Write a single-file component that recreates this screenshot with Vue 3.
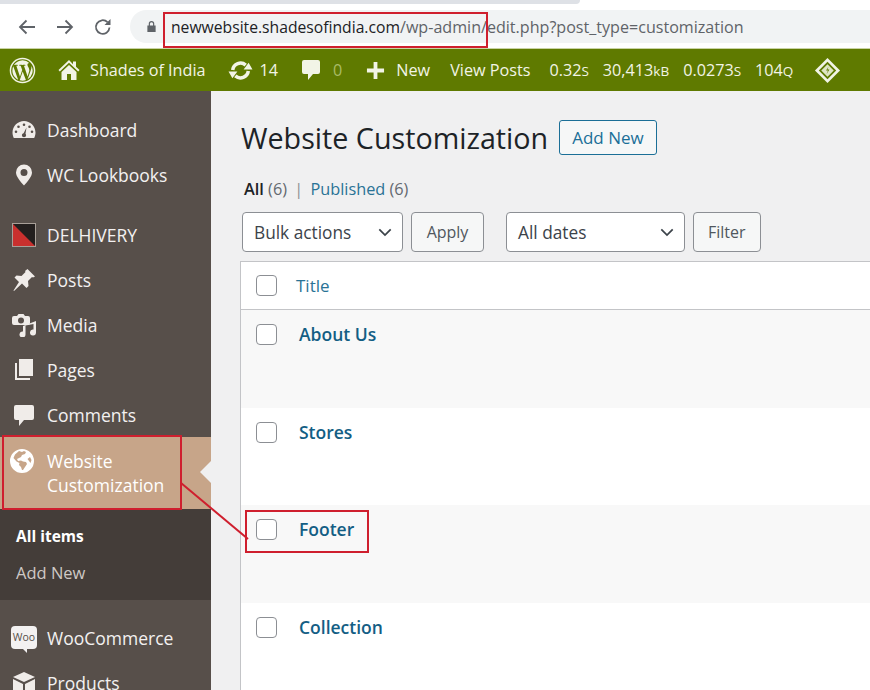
<script setup>
const topMenu = [
  { label: 'Dashboard', icon: 'dash' },
  { label: 'WC Lookbooks', icon: 'pin' }
]
const midMenu = [
  { label: 'Posts', icon: 'post' },
  { label: 'Media', icon: 'media' },
  { label: 'Pages', icon: 'pages' },
  { label: 'Comments', icon: 'comment' }
]
const rows = [
  { title: 'About Us', alt: true },
  { title: 'Stores', alt: false },
  { title: 'Footer', alt: true },
  { title: 'Collection', alt: false }
]
</script>

<template>
  <div class="page">
    <div class="tabstrip"><div class="tab-gray"></div></div>
    <div class="toolbar">
      <svg class="nav-icon" viewBox="0 0 20 20"><path d="M18 10H3M9.5 3.5 3 10l6.5 6.500" fill="none" stroke="#5f6368" stroke-width="1.800"/></svg>
      <svg class="nav-icon" viewBox="0 0 20 20"><path d="M2 10h15M10.500 3.500 17 10l-6.500 6.500" fill="none" stroke="#5f6368" stroke-width="1.800"/></svg>
      <svg class="nav-icon" viewBox="0 0 20 20"><path d="M16.500 10.500a6.800 6.800 0 1 1-2-5.300" fill="none" stroke="#5f6368" stroke-width="1.800"/><path d="M17.500 2v6h-6z" fill="#5f6368"/></svg>
      <div class="omnibox">
        <svg class="lock" viewBox="0 0 12 14"><path d="M3 6V4a3 3 0 0 1 6 0v2h1.500v7h-9V6zm1.300 0h3.400V4a1.700 1.700 0 0 0-3.400 0z" fill="#5f6368"/></svg>
        <span class="url"><span class="host">newwebsite.shadesofindia.com</span>/wp-admin/edit.php?post_type=customization</span>
      </div>
    </div>

    <div class="adminbar">
      <svg class="wp-logo" viewBox="0 0 28 28">
        <circle cx="14" cy="14" r="12.500" fill="none" stroke="#f2f4e6" stroke-width="1.500"/>
        <path d="M3.500 14c0 4.200 2.400 7.800 6 9.500L4.400 9.700A10.500 10.500 0 0 0 3.500 14zm17.500-.5c0-1.300-.5-2.200-.9-2.900-.5-.9-1-1.600-1-2.500 0-1 .8-1.900 1.800-1.900h.2A10.500 10.500 0 0 0 5.200 8.200h.7c1.100 0 2.800-.1 2.800-.1.600 0 .6.800.1.900 0 0-.6.100-1.200.1l3.800 11.300 2.300-6.900-1.600-4.400c-.6 0-1.100-.1-1.100-.1-.6 0-.5-.9 0-.9 0 0 1.800.1 2.800.1s2.800-.1 2.800-.1c.6 0 .6.800.1.900 0 0-.6.100-1.200.1l3.800 11.200 1-3.500c.5-1.400.8-2.400.8-3.300zM14.200 15l-3.100 9.100a10.500 10.500 0 0 0 6.500-.2l-.1-.1zm9-6c0 .4.100.800.100 1.200 0 1.100-.2 2.300-.8 3.800l-3.200 9.200A10.500 10.500 0 0 0 23.200 9z" fill="#f2f4e6"/>
      </svg>
      <svg class="bar-icon home" viewBox="0 0 22 22"><path d="M11 1 .5 11l1.300 1.400L11 3.800l9.200 8.600 1.300-1.400-3.500-3.300V2.500h-3v2.800z" fill="#f2f4e6"/><path d="M11 6 3.500 13v8H9v-6h4v6h5.500v-8z" fill="#f2f4e6"/></svg>
      <span class="bar-text site">Shades of India</span>
      <svg class="bar-icon sync" viewBox="0 0 24 24">
        <path d="M4.500 11.500A7.600 7.600 0 0 1 17 6.800M19.500 12.500A7.600 7.600 0 0 1 7 17.200" fill="none" stroke="#f2f4e6" stroke-width="3.400"/>
        <path d="M23.500 11h-8.500l4.800-6.500zM.5 13H9l-4.800 6.500z" fill="#f2f4e6"/>
      </svg>
      <span class="bar-text count">14</span>
      <svg class="bar-icon bubble" viewBox="0 0 20 22"><path d="M3 1h14a2 2 0 0 1 2 2v10a2 2 0 0 1-2 2h-5l-5 6v-6H3a2 2 0 0 1-2-2V3a2 2 0 0 1 2-2z" fill="#f2f4e6"/></svg>
      <span class="bar-text zero">0</span>
      <svg class="bar-icon plus" viewBox="0 0 20 20"><path d="M8 1h4v7h7v4h-7v7H8v-7H1V8h7z" fill="#f2f4e6"/></svg>
      <span class="bar-text new">New</span>
      <span class="bar-text view">View Posts</span>
      <span class="bar-text stat s1">0.32<small>S</small></span>
      <span class="bar-text stat s2">30,413<small>kB</small></span>
      <span class="bar-text stat s3">0.0273<small>S</small></span>
      <span class="bar-text stat s4">104<small>Q</small></span>
      <svg class="diamond" viewBox="0 0 28 28">
        <path d="M14 1 27 14 14 27 1 14z" fill="#f2f4e6"/>
        <path d="M14 5 23 14 14 23 5 14z" fill="#5f7a00"/>
        <path d="M14 7.500 20.500 14 14 20.500 7.500 14z" fill="#dfe5c4"/>
        <path d="M15 10l-2.500 4h2l-1.500 4 3-5h-2z" fill="#5f7a00"/>
      </svg>
    </div>

    <div class="body">
      <aside class="sidebar">
        <ul class="menu first">
          <li v-for="m in topMenu" :key="m.label" class="menu-item">
            <span class="micon">
              <svg v-if="m.icon === 'dash'" viewBox="0 0 24 24" class="ic ic-dash"><path d="M12 3C5.900 3 .5 8 .5 14.500c0 2 .5 3.800 1.300 5.500h20.400c.8-1.700 1.300-3.500 1.300-5.500C23.500 8 18.100 3 12 3zM12 5.500a1.300 1.300 0 1 1 0 2.600 1.300 1.300 0 0 1 0-2.600zM6.500 7.500a1.300 1.300 0 1 1 0 2.600 1.300 1.300 0 0 1 0-2.600zM17.500 7.500a1.300 1.300 0 1 1 0 2.600 1.300 1.300 0 0 1 0-2.600zM4 12.500a1.300 1.300 0 1 1 0 2.600 1.300 1.300 0 0 1 0-2.600zM20 12.500a1.300 1.300 0 1 1 0 2.600 1.300 1.300 0 0 1 0-2.600zM14.500 9.500l-1 6.200c.4.500.6 1 .6 1.500a2.100 2.100 0 0 1-4.200 0c0-1 .7-1.800 1.700-2z" fill="#f0ece9" fill-rule="evenodd"/></svg>
              <svg v-else viewBox="0 0 24 24" class="ic"><path d="M12 1.500a8 8 0 0 0-8 8c0 3.800 4.500 9.500 8 13 3.500-3.500 8-9.200 8-13a8 8 0 0 0-8-8zm0 4.500a3.500 3.500 0 1 1 0 7 3.500 3.500 0 0 1 0-7z" fill="#f0ece9" fill-rule="evenodd"/></svg>
            </span>
            <span class="mlabel">{{ m.label }}</span>
          </li>
        </ul>
        <ul class="menu second">
          <li class="menu-item">
            <span class="micon">
              <svg viewBox="0 0 24 24" class="ic ic-del"><rect x=".5" y=".5" width="23" height="23" fill="#c9302e" stroke="#a89f98"/><path d="M1 1h22v22z" fill="#231f1e"/></svg>
            </span>
            <span class="mlabel">DELHIVERY</span>
          </li>
          <li v-for="m in midMenu" :key="m.label" class="menu-item">
            <span class="micon">
              <svg v-if="m.icon === 'post'" viewBox="0 0 24 24" class="ic"><path d="M15.500 1 23 8.500l-2 1-1-.5-4 4 .5 5-2 2-4.500-4.500L2 23l-.500-.5 5.500-8.500-4.500-4.500 2-2 5 .5 4-4-.5-1z" fill="#f0ece9"/></svg>
              <svg v-else-if="m.icon === 'media'" viewBox="0 0 26 24" class="ic ic-media"><path d="M3 3h3l1.500-2h5L14 3h3a2 2 0 0 1 2 2v5a2 2 0 0 1-2 2H3a2 2 0 0 1-2-2V5a2 2 0 0 1 2-2zm7 1.500a3 3 0 1 0 0 6 3 3 0 0 0 0-6z" fill="#f0ece9" fill-rule="evenodd"/><path d="M25 8v11.500a3 3 0 1 1-2.500-3V11l-8 1.500v9a3 3 0 1 1-2.500-3V13z" fill="#f0ece9"/></svg>
              <svg v-else-if="m.icon === 'pages'" viewBox="0 0 24 24" class="ic"><path d="M7 1h14v17H7z" fill="#f0ece9"/><path d="M3 5h2v15h13v2H3z" fill="#f0ece9"/></svg>
              <svg v-else viewBox="0 0 24 24" class="ic"><path d="M4 2h16a2 2 0 0 1 2 2v11a2 2 0 0 1-2 2h-8l-5 6v-6H4a2 2 0 0 1-2-2V4a2 2 0 0 1 2-2z" fill="#f0ece9"/></svg>
            </span>
            <span class="mlabel">{{ m.label }}</span>
          </li>
        </ul>
        <div class="menu-item active">
          <span class="micon">
            <svg viewBox="0 0 24 24" class="ic ic-globe"><path d="M12 0a12 12 0 1 0 0 24 12 12 0 0 0 0-24zM9 2l3 1 2-1 2 1-1 2-3 1-1 2-2 1-2 1 1 2 3-.5 2 1 3 .5 1 2-2 3-2 3h-1l-1-3-2-2 .5-2-3-1.500L3.500 9 5 5.500zm11 6 1.500 3-1 3-1.500-2-1.500-2z" fill="#fff" fill-rule="evenodd"/></svg>
          </span>
          <span class="mlabel two-line">Website<br>Customization</span>
          <span class="pointer"></span>
        </div>
        <div class="submenu">
          <div class="sub on">All items</div>
          <div class="sub">Add New</div>
        </div>
        <ul class="menu third">
          <li class="menu-item">
            <span class="micon">
              <span class="woo">Woo</span>
            </span>
            <span class="mlabel">WooCommerce</span>
          </li>
          <li class="menu-item">
            <span class="micon">
              <svg viewBox="0 0 24 24" class="ic"><path d="M12 1 23 6 12 11 1 6z" fill="#f0ece9"/><path d="M1 8l10 5v11L1 19zM23 8v11l-10 5V13z" fill="#f0ece9"/></svg>
            </span>
            <span class="mlabel">Products</span>
          </li>
        </ul>
      </aside>

      <main class="content">
        <div class="heading">
          <h1>Website Customization</h1>
          <a class="add-new">Add New</a>
        </div>
        <div class="subsub">
          <b>All</b> <span class="num">(6)</span> <span class="sep">|</span> <a>Published</a> <span class="num">(6)</span>
        </div>
        <div class="filters">
          <div class="select bulk">
            <span>Bulk actions</span>
            <svg viewBox="0 0 16 10" class="chev"><path d="M1.500 1.500 8 8l6.500-6.500" fill="none" stroke="#3c434a" stroke-width="2"/></svg>
          </div>
          <button class="btn apply">Apply</button>
          <div class="select dates">
            <span>All dates</span>
            <svg viewBox="0 0 16 10" class="chev"><path d="M1.500 1.500 8 8l6.500-6.500" fill="none" stroke="#3c434a" stroke-width="2"/></svg>
          </div>
          <button class="btn">Filter</button>
        </div>
        <div class="table">
          <div class="thead">
            <span class="check"></span>
            <a class="th-title">Title</a>
          </div>
          <div v-for="r in rows" :key="r.title" class="row" :class="{ alt: r.alt }">
            <span class="check"></span>
            <a class="row-title">{{ r.title }}</a>
          </div>
        </div>
      </main>
    </div>

    <!-- red annotation marks drawn on top of the screenshot -->
    <div class="mark mark-url"></div>
    <div class="mark mark-menu"></div>
    <div class="mark mark-footer"></div>
    <svg class="mark-line" viewBox="0 0 870 690"><path d="M181 483 248 539" stroke="#cf1f2e" stroke-width="2" fill="none"/></svg>
  </div>
</template>

<style>
body {
  margin: 0;
  overflow: hidden;
}
</style>

<style scoped>
.page {
  position: relative;
  width: 870px;
  height: 690px;
  overflow: hidden;
  background: #f0f0f1;
  font-family: "Open Sans", "Noto Sans", sans-serif;
  color: #3c434a;
}

.tabstrip {
  height: 4px;
  background: #fff;
}

.tab-gray {
  width: 580px;
  height: 4px;
  background: #dee1e6;
  border-bottom-right-radius: 4px;
}

.toolbar {
  display: flex;
  align-items: center;
  height: 44px;
  padding-left: 17px;
  padding-top: 1px;
  background: #fff;
  box-sizing: border-box;
}

.nav-icon {
  width: 20px;
  height: 20px;
  margin-right: 18px;
  flex-shrink: 0;
}

.omnibox {
  display: flex;
  align-items: center;
  flex: 1;
  height: 33px;
  margin-left: -1px;
  padding-left: 16px;
  background: #f1f3f4;
  border-radius: 17px 0 0 17px;
}

.lock {
  width: 11px;
  height: 13px;
  margin-right: 14px;
}

.url {
  font-size: 16.100px;
  color: #5f6368;
  white-space: nowrap;
}

.host {
  font-size: 15.700px;
  color: #202124;
}

.adminbar {
  display: flex;
  align-items: center;
  height: 43px;
  background: #5f7a00;
  border-top: 1px solid #c9d3a4;
  box-sizing: border-box;
  color: #f2f4e6;
}

.wp-logo {
  width: 27px;
  height: 27px;
  margin-left: 9px;
  flex-shrink: 0;
}

.bar-icon {
  flex-shrink: 0;
}

.home {
  width: 22px;
  height: 22px;
  margin-left: 22px;
}

.bar-text {
  font-size: 16.200px;
  white-space: nowrap;
}

.site {
  margin-left: 10px;
}

.sync {
  width: 25px;
  height: 25px;
  margin-left: 22px;
}

.count {
  margin-left: 7px;
}

.bubble {
  width: 20px;
  height: 22px;
  margin-left: 23px;
}

.zero {
  margin-left: 12px;
  color: #a9bc66;
}

.plus {
  width: 19px;
  height: 19px;
  margin-left: 24px;
}

.new {
  margin-left: 11px;
}

.view {
  margin-left: 20px;
}

.stat small {
  font-size: 13.500px;
}

.s1 {
  margin-left: 19px;
}

.s2,
.s3,
.s4 {
  margin-left: 14px;
}

.diamond {
  width: 27px;
  height: 27px;
  margin-left: 21px;
}

.body {
  display: flex;
  height: 599px;
}

.sidebar {
  width: 211px;
  flex-shrink: 0;
  background: #574f4a;
  color: #f3f1f1;
}

.menu {
  list-style: none;
  margin: 0;
  padding: 0;
}

.first {
  padding-top: 16px;
}

.second {
  padding-top: 15px;
}

.third {
  padding-top: 15px;
}

.menu-item {
  display: flex;
  align-items: center;
  height: 45px;
  font-size: 17.500px;
}

.micon {
  display: flex;
  align-items: center;
  justify-content: center;
  width: 24px;
  height: 24px;
  margin-left: 12px;
  margin-right: 11px;
  flex-shrink: 0;
}

.ic {
  width: 24px;
  height: 24px;
}

.ic-media {
  width: 26px;
  flex-shrink: 0;
}

.mlabel {
  white-space: nowrap;
}

.two-line {
  line-height: 24px;
}

.active {
  position: relative;
  height: 72px;
  align-items: flex-start;
  padding-top: 12px;
  box-sizing: border-box;
  background: #c7a589;
  color: #fff;
}

.active .micon {
  margin-left: 10px;
  margin-right: 13px;
}

.pointer {
  position: absolute;
  right: 0;
  top: 24px;
  border: 11px solid transparent;
  border-left: none;
  border-right-color: #f0f0f1;
}

.submenu {
  height: 91px;
  padding-top: 14px;
  box-sizing: border-box;
  background: #443d39;
}

.sub {
  height: 37px;
  line-height: 26px;
  padding-left: 16px;
  font-size: 16.500px;
  color: #cfc9c5;
}

.sub.on {
  font-size: 15.500px;
  font-weight: 700;
  color: #fff;
}

.woo {
  position: relative;
  display: block;
  width: 26px;
  height: 23px;
  flex-shrink: 0;
  border-radius: 4px;
  background: #f3f1f1;
  color: #574f4a;
  font-size: 10.500px;
  line-height: 22px;
  text-align: center;
}

.woo::after {
  content: '';
  position: absolute;
  left: 12px;
  bottom: -4px;
  border-top: 4px solid #f3f1f1;
  border-left: 4px solid transparent;
}

.content {
  flex: 1;
  min-width: 0;
  padding-left: 29px;
}

.heading {
  display: flex;
  align-items: center;
  height: 84px;
  padding-top: 8px;
  padding-left: 1px;
  box-sizing: border-box;
}

h1 {
  margin: 0;
  font-size: 28.700px;
  font-weight: 400;
  color: #1d2327;
  white-space: nowrap;
}

.add-new {
  margin-left: 11px;
  height: 35px;
  line-height: 33px;
  padding: 0 12px;
  box-sizing: border-box;
  border: 1px solid #1b6f97;
  border-radius: 3px;
  color: #1b6f97;
  background: #f6f7f7;
  font-size: 17px;
}

.subsub {
  height: 37px;
  padding-left: 4px;
  font-size: 16.300px;
  line-height: 28px;
  color: #646970;
}

.subsub b {
  font-weight: 600;
  color: #1d2327;
}

.subsub a {
  color: #2a7396;
}

.sep {
  color: #8c8f94;
  margin: 0 3px;
}

.filters {
  display: flex;
  align-items: center;
  height: 40px;
  gap: 8px;
  padding-left: 2px;
}

.select {
  display: flex;
  align-items: center;
  justify-content: space-between;
  height: 40px;
  box-sizing: border-box;
  padding: 0 10px 0 11px;
  border: 1px solid #8c8f94;
  border-radius: 4px;
  background: #fff;
  font-size: 17.300px;
}

.bulk {
  width: 161px;
}

.dates {
  width: 179px;
  margin-left: 14px;
}

.chev {
  width: 14px;
  height: 9px;
}

.btn {
  height: 40px;
  padding: 0 14px;
  border: 1px solid #8c8f94;
  border-radius: 4px;
  background: #f6f7f7;
  color: #50575e;
  font: inherit;
  font-size: 16px;
}

.apply {
  width: 73px;
  padding: 0;
}

.table {
  margin-top: 9px;
  background: #fff;
  border: 1px solid #c3c4c7;
  border-right: none;
  border-bottom: none;
}

.thead {
  display: flex;
  align-items: center;
  height: 48px;
  padding-left: 15px;
  padding-bottom: 1px;
  box-sizing: border-box;
  border-bottom: 1px solid #c3c4c7;
}

.check {
  width: 21px;
  height: 21px;
  box-sizing: border-box;
  border: 1px solid #8c8f94;
  border-radius: 4px;
  background: #fff;
  flex-shrink: 0;
}

.th-title {
  margin-left: 19px;
  font-size: 17px;
  color: #2a7396;
}

.row {
  display: flex;
  align-items: flex-start;
  height: 97.500px;
  padding-left: 15px;
  padding-top: 14px;
  box-sizing: border-box;
}

.row.alt {
  background: #f8f8f8;
}

.row-title {
  margin-left: 22px;
  font-size: 17.500px;
  font-weight: 600;
  line-height: 20px;
  color: #135e84;
}

.mark {
  position: absolute;
  box-sizing: border-box;
  border: 2px solid #cf1f2e;
}

.mark-url {
  left: 163px;
  top: 12px;
  width: 325px;
  height: 36px;
}

.mark-menu {
  left: 2px;
  top: 435px;
  width: 180px;
  height: 75px;
}

.mark-footer {
  left: 245px;
  top: 510px;
  width: 124px;
  height: 43px;
}

.mark-line {
  position: absolute;
  left: 0;
  top: 0;
  width: 870px;
  height: 690px;
  pointer-events: none;
}
</style>
